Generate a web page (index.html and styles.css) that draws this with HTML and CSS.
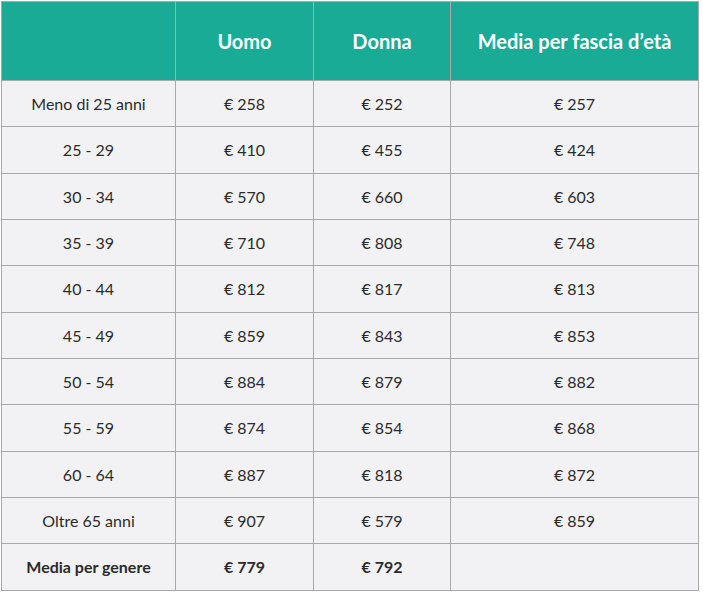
FILE: index.html
```html
<!DOCTYPE html>
<html lang="it">
<head>
<meta charset="utf-8">
<title>Stipendi per fascia d'età</title>
<link rel="stylesheet" href="styles.css">
</head>
<body>
<table class="salary">
  <colgroup>
    <col class="c1"><col class="c2"><col class="c3"><col class="c4">
  </colgroup>
  <thead>
    <tr><th></th><th>Uomo</th><th>Donna</th><th>Media per fascia d’età</th></tr>
  </thead>
  <tbody>
    <tr><td>Meno di 25 anni</td><td>€ 258</td><td>€ 252</td><td>€ 257</td></tr>
    <tr><td>25 - 29</td><td>€ 410</td><td>€ 455</td><td>€ 424</td></tr>
    <tr><td>30 - 34</td><td>€ 570</td><td>€ 660</td><td>€ 603</td></tr>
    <tr><td>35 - 39</td><td>€ 710</td><td>€ 808</td><td>€ 748</td></tr>
    <tr><td>40 - 44</td><td>€ 812</td><td>€ 817</td><td>€ 813</td></tr>
    <tr><td>45 - 49</td><td>€ 859</td><td>€ 843</td><td>€ 853</td></tr>
    <tr><td>50 - 54</td><td>€ 884</td><td>€ 879</td><td>€ 882</td></tr>
    <tr><td>55 - 59</td><td>€ 874</td><td>€ 854</td><td>€ 868</td></tr>
    <tr><td>60 - 64</td><td>€ 887</td><td>€ 818</td><td>€ 872</td></tr>
    <tr><td>Oltre 65 anni</td><td>€ 907</td><td>€ 579</td><td>€ 859</td></tr>
    <tr class="total"><td>Media per genere</td><td>€ 779</td><td>€ 792</td><td></td></tr>
  </tbody>
</table>
</body>
</html>
```
FILE: styles.css
```css
html, body {
  margin: 0;
  padding: 0;
  background: #ffffff;
}

body {
  padding: 1px 0 0 1px;
  font-family: Lato, "Open Sans", sans-serif;
  color: #2b2b2b;
}

.salary {
  border-collapse: collapse;
  table-layout: fixed;
  width: 697px;
}

.c1 { width: 174px; }
.c2 { width: 138px; }
.c3 { width: 137px; }
.c4 { width: 248px; }

.salary th,
.salary td {
  border: 1px solid #a9a9a9;
  text-align: center;
  vertical-align: middle;
  padding: 0;
}

.salary thead th {
  background: #1aab96;
  color: #ffffff;
  font-size: 20px;
  font-weight: 700;
  height: 78px;
}

.salary tbody td {
  background: #f2f2f4;
  font-size: 16px;
  height: 45.33px;
}

.salary .total td {
  font-weight: 700;
}
```
